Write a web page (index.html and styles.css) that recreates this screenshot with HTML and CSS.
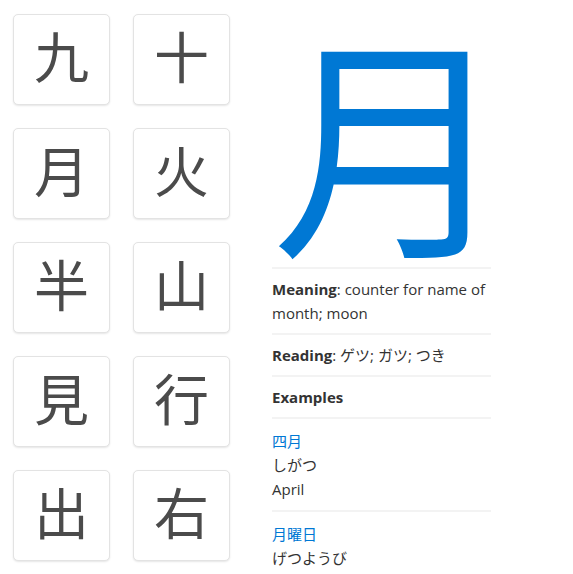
FILE: index.html
```html
<!DOCTYPE html>
<html lang="ja">
<head>
<meta charset="utf-8">
<link rel="stylesheet" href="styles.css">
</head>
<body>
<div class="app">
  <div class="grid">
    <div class="card">九</div>
    <div class="card">十</div>
    <div class="card">月</div>
    <div class="card">火</div>
    <div class="card">半</div>
    <div class="card">山</div>
    <div class="card">見</div>
    <div class="card">行</div>
    <div class="card">出</div>
    <div class="card">右</div>
  </div>
  <div class="detail">
    <div class="big">月</div>
    <div class="section"><b>Meaning</b>: counter for name of month; moon</div>
    <div class="section"><b>Reading</b>: ゲツ; ガツ; つき</div>
    <div class="section"><b>Examples</b></div>
    <div class="section example">
      <div class="word">四月</div>
      <div>しがつ</div>
      <div>April</div>
    </div>
    <div class="section example">
      <div class="word">月曜日</div>
      <div>げつようび</div>
    </div>
  </div>
</div>
</body>
</html>
```
FILE: styles.css
```css
html, body {
  margin: 0;
  padding: 0;
  background: #ffffff;
  overflow: hidden;
  height: 574px;
}
body {
  font-family: "Open Sans", "Noto Sans CJK JP", sans-serif;
  color: #333333;
}
.app {
  display: flex;
  align-items: flex-start;
}
.grid {
  display: grid;
  grid-template-columns: 97px 97px;
  grid-auto-rows: 91px;
  gap: 23px;
  padding: 14px 0 0 13px;
}
.card {
  box-sizing: border-box;
  border: 1px solid #e3e3e3;
  border-radius: 5px;
  background: #fff;
  box-shadow: 0 1px 2px rgba(0,0,0,0.1);
  display: flex;
  align-items: center;
  justify-content: center;
  padding-bottom: 10px;
  font-family: "Noto Sans CJK JP", sans-serif;
  font-size: 55px;
  color: #4b4b4b;
  line-height: 1;
}
.detail {
  width: 219px;
  margin-left: 42px;
  font-size: 15px;
  line-height: 24px;
}
.big {
  box-sizing: border-box;
  height: 267px;
  padding-top: 17px;
  font-family: "Noto Sans CJK JP", sans-serif;
  font-size: 238px;
  line-height: 238px;
  color: #0078d4;
  text-align: center;
}
.section {
  border-top: 2px solid #f3f3f3;
  padding: 8px 0;
}
.section b {
  font-weight: 700;
  color: #333333;
}
.example {
  padding: 10px 0 9px;
}
.word {
  color: #0078d4;
}
```
